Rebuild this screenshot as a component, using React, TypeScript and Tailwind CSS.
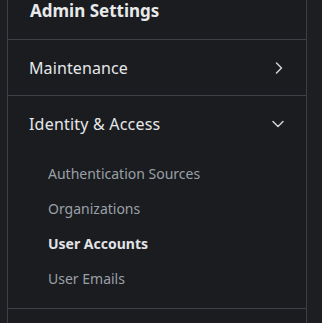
import { ChevronDown, ChevronRight } from "lucide-react";

const subItems = [
  { label: "Authentication Sources", active: false },
  { label: "Organizations", active: false },
  { label: "User Accounts", active: true },
  { label: "User Emails", active: false },
];

export default function App() {
  return (
    <div
      className="min-h-screen bg-[#1c1e22] pl-[7px] overflow-hidden"
      style={{ fontFamily: '"Noto Sans", "Open Sans", sans-serif' }}
    >
      <div className="w-[300px] min-h-screen bg-[#1a1c20] border-x border-[#3d4046]">
        {/* Header */}
        <div className="h-[40px] border-b border-[#3d4046] pl-[22px]">
          <h2 className="text-[17px] leading-[21px] font-bold text-[#e8e9eb]">Admin Settings</h2>
        </div>

        {/* Maintenance */}
        <div className="h-[56px] flex items-center justify-between pl-[21px] pr-[17px] border-b border-[#3d4046]">
          <span className="text-[16px] tracking-[0.1px] text-[#e6e7e9]">Maintenance</span>
          <ChevronRight size={20} strokeWidth={1.8} className="text-[#d0d2d5]" />
        </div>

        {/* Identity & Access */}
        <div className="border-b border-[#3d4046]">
          <div className="h-[56px] flex items-center justify-between pl-[21px] pr-[18px]">
            <span className="text-[16px] tracking-[0.2px] text-[#e6e7e9]">Identity &amp; Access</span>
            <ChevronDown size={20} strokeWidth={1.8} className="text-[#d0d2d5]" />
          </div>
          <ul className="pt-[4px] pb-[12px]">
            {subItems.map((item) => (
              <li
                key={item.label}
                className={
                  item.active
                    ? "h-[35px] flex items-center pl-[40px] text-[14px] font-bold text-[#e2e3e6]"
                    : "h-[35px] flex items-center pl-[40px] text-[14px] text-[#9aa0a7]"
                }
              >
                {item.label}
              </li>
            ))}
          </ul>
        </div>
      </div>
    </div>
  );
}
